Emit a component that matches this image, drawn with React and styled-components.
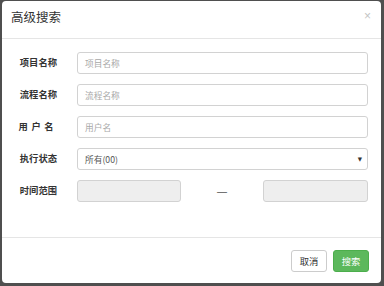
import React from "react";
import styled, { createGlobalStyle } from "styled-components";

const Global = createGlobalStyle`
  html, body { margin: 0; padding: 0; }
  body {
    background: #4f4f4f;
    width: 384px;
    height: 286px;
    overflow: hidden;
    font-family: "Noto Sans CJK SC", "Liberation Sans", sans-serif;
  }
`;

const Modal = styled.div`
  margin: 1px 0 0 2px;
  width: 379px;
  height: 282px;
  background: #fff;
  border-radius: 4px;
  display: flex;
  flex-direction: column;
  box-sizing: border-box;
`;

const Header = styled.div`
  height: 38px;
  box-sizing: border-box;
  border-bottom: 1px solid #e5e5e5;
  display: flex;
  align-items: center;
  justify-content: space-between;
  padding: 0 10px 4px 9px;
`;

const Title = styled.div`
  font-size: 12.5px;
  color: #333;
  line-height: 1;
`;

const Close = styled.div`
  font-family: "Liberation Sans", sans-serif;
  font-size: 12px;
  color: #c4c4c4;
  line-height: 1;
  margin-top: -4px;
`;

const Body = styled.div`
  flex: 1;
  padding: 13px 13px 0 0;
  display: flex;
  flex-direction: column;
  gap: 10px;
  border-bottom: 1px solid #e5e5e5;
`;

const Row = styled.div`
  display: grid;
  grid-template-columns: 75px 1fr;
  align-items: center;
  height: 22px;
`;

const Label = styled.div`
  font-size: 9.3px;
  font-weight: bold;
  color: #333;
  text-align: right;
  padding-right: 20px;
  margin-top: -3px;
  letter-spacing: ${(p) => (p.$spaced ? "3.5px" : "0")};
`;

const Input = styled.div`
  height: 22px;
  box-sizing: border-box;
  border: 1px solid #d2d2d2;
  border-radius: 3px;
  background: ${(p) => (p.$disabled ? "#eeeeee" : "#fff")};
  display: flex;
  align-items: center;
  padding: 0 7px;
  font-size: 8.7px;
  color: ${(p) => (p.$value ? "#555" : "#a8a8a8")};
  width: ${(p) => p.$w || "auto"};
`;

const Arrow = styled.span`
  margin-left: auto;
  font-family: "DejaVu Sans", sans-serif;
  font-size: 5.5px;
  color: #333;
  margin-right: -2px;
`;

const Range = styled.div`
  display: flex;
  align-items: center;
`;

const Dash = styled.span`
  flex: 1;
  text-align: center;
  font-family: "Liberation Sans", sans-serif;
  font-size: 10px;
  color: #555;
`;

const Footer = styled.div`
  height: 45px;
  display: flex;
  justify-content: flex-end;
  align-items: flex-start;
  gap: 6px;
  padding: 12px 12px 0 0;
  box-sizing: border-box;
`;

const Button = styled.button`
  height: 22px;
  width: ${(p) => p.$w};
  box-sizing: border-box;
  padding: 0;
  border-radius: 3px;
  font-family: "Noto Sans CJK SC", sans-serif;
  font-size: 9.3px;
  border: 1px solid ${(p) => (p.$primary ? "#4cae4c" : "#ccc")};
  background: ${(p) => (p.$primary ? "#5cb85c" : "#fff")};
  color: ${(p) => (p.$primary ? "#fff" : "#333")};
`;

export default function App() {
  return (
    <>
      <Global />
      <Modal>
        <Header>
          <Title>高级搜索</Title>
          <Close>×</Close>
        </Header>
        <Body>
          <Row>
            <Label>项目名称</Label>
            <Input>项目名称</Input>
          </Row>
          <Row>
            <Label>流程名称</Label>
            <Input>流程名称</Input>
          </Row>
          <Row>
            <Label $spaced>用户名</Label>
            <Input>用户名</Input>
          </Row>
          <Row>
            <Label>执行状态</Label>
            <Input $value>
              所有(00)
              <Arrow>▼</Arrow>
            </Input>
          </Row>
          <Row>
            <Label>时间范围</Label>
            <Range>
              <Input $disabled $w="104px" />
              <Dash>—</Dash>
              <Input $disabled $w="105px" />
            </Range>
          </Row>
        </Body>
        <Footer>
          <Button $w="36px">取消</Button>
          <Button $primary $w="36px">搜索</Button>
        </Footer>
      </Modal>
    </>
  );
}
